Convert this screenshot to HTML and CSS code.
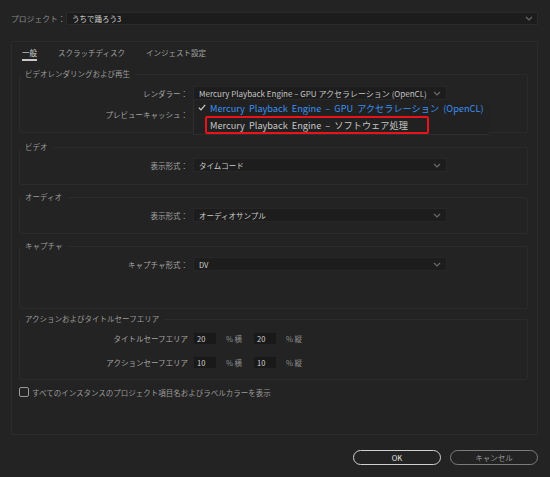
FILE: index.html
```html
<!DOCTYPE html>
<html lang="ja">
<head>
<meta charset="utf-8">
<title>プロジェクト設定</title>
<link rel="stylesheet" href="styles.css">
</head>
<body>
<div class="top">
  <span class="top-label">プロジェクト：</span>
  <div class="top-input">
    <span>うちで踊ろう3</span>
    <svg class="chev" width="8" height="5" viewBox="0 0 8 5"><path d="M1 1l3 3 3-3" fill="none" stroke="#6a6a6a" stroke-width="1.2"/></svg>
  </div>
</div>

<div class="panel">
  <div class="tabs">
    <span class="tab active">一般</span>
    <span class="tab">スクラッチディスク</span>
    <span class="tab">インジェスト設定</span>
  </div>

  <fieldset class="sec s1">
    <legend>ビデオレンダリングおよび再生</legend>
    <div class="row">
      <span class="lbl">レンダラー：</span>
      <div class="sel sel-render">
        <span>Mercury Playback Engine – GPU アクセラレーション (OpenCL)</span>
        <svg class="chev" width="8" height="5" viewBox="0 0 8 5"><path d="M1 1l3 3 3-3" fill="none" stroke="#6a6a6a" stroke-width="1.2"/></svg>
        <div class="popup">
          <div class="opt opt-on">
            <svg class="check" width="8" height="7" viewBox="0 0 8 7"><path d="M0.8 3.6l2.2 2.2L7.2 0.9" fill="none" stroke="#d0d0d0" stroke-width="1.2"/></svg>
            <span>Mercury Playback Engine – GPU アクセラレーション (OpenCL)</span>
          </div>
          <div class="opt opt-hl">
            <span>Mercury Playback Engine – ソフトウェア処理</span>
          </div>
        </div>
      </div>
    </div>
    <div class="row row2">
      <span class="lbl">プレビューキャッシュ：</span>
    </div>
  </fieldset>

  <fieldset class="sec s2">
    <legend>ビデオ</legend>
    <div class="row">
      <span class="lbl">表示形式：</span>
      <div class="sel">
        <span>タイムコード</span>
        <svg class="chev" width="8" height="5" viewBox="0 0 8 5"><path d="M1 1l3 3 3-3" fill="none" stroke="#6a6a6a" stroke-width="1.2"/></svg>
      </div>
    </div>
  </fieldset>

  <fieldset class="sec s3">
    <legend>オーディオ</legend>
    <div class="row">
      <span class="lbl">表示形式：</span>
      <div class="sel">
        <span>オーディオサンプル</span>
        <svg class="chev" width="8" height="5" viewBox="0 0 8 5"><path d="M1 1l3 3 3-3" fill="none" stroke="#6a6a6a" stroke-width="1.2"/></svg>
      </div>
    </div>
  </fieldset>

  <fieldset class="sec s4">
    <legend>キャプチャ</legend>
    <div class="row">
      <span class="lbl">キャプチャ形式：</span>
      <div class="sel">
        <span>DV</span>
        <svg class="chev" width="8" height="5" viewBox="0 0 8 5"><path d="M1 1l3 3 3-3" fill="none" stroke="#6a6a6a" stroke-width="1.2"/></svg>
      </div>
    </div>
  </fieldset>

  <fieldset class="sec s5">
    <legend>アクションおよびタイトルセーフエリア</legend>
    <div class="row">
      <span class="lbl lbl-safe">タイトルセーフエリア</span>
      <span class="num">20</span>
      <span class="unit">% 横</span>
      <span class="num">20</span>
      <span class="unit">% 縦</span>
    </div>
    <div class="row row-b">
      <span class="lbl lbl-safe">アクションセーフエリア</span>
      <span class="num">10</span>
      <span class="unit">% 横</span>
      <span class="num">10</span>
      <span class="unit">% 縦</span>
    </div>
  </fieldset>

  <div class="chk-row">
    <span class="chk"></span>
    <span class="chk-text">すべてのインスタンスのプロジェクト項目名およびラベルカラーを表示</span>
  </div>
</div>

<div class="buttons">
  <span class="btn btn-ok">OK</span>
  <span class="btn btn-cancel">キャンセル</span>
</div>
</body>
</html>
```

FILE: styles.css
```css
* { box-sizing: border-box; }
html, body { margin: 0; padding: 0; }
body {
  width: 550px;
  height: 477px;
  background: #232323;
  font-family: "Noto Sans CJK JP", "Noto Sans", sans-serif;
  font-size: 7.5px;
  color: #a3a3a3;
  overflow: hidden;
}

.top {
  display: flex;
  align-items: center;
  padding: 12px 12px 0 11px;
  height: 25px;
}
.top-label { width: 55px; color: #8a8a8a; font-size: 7.8px; }
.top-input {
  flex: 1;
  height: 13px;
  background: #1c1c1c;
  border: 1px solid #2a2a2a;
  display: flex;
  align-items: center;
  justify-content: space-between;
  padding: 0 4px 0 5px;
  color: #cfcfcf;
}

.chev { display: block; }

.panel {
  margin: 16px 12px 0 11px;
  height: 394px;
  border: 1px solid #2c2c2c;
  border-radius: 2px;
  padding: 0 9px 0 7px;
}

.tabs {
  display: flex;
  height: 26px;
  padding: 6px 0 0 3px;
}
.tab {
  line-height: 10px;
  margin-right: 21px;
  color: #a0a0a0;
}
.tab.active {
  color: #d6d6d6;
  height: 13px;
  border-bottom: 2px solid #c8c8c8;
}

.sec {
  margin: 0;
  border: 1px solid #2b2b2b;
  border-radius: 2px;
  padding: 0;
  min-width: 0;
}
.sec legend {
  padding: 0 5px 0 4px;
  margin-left: 1px;
  line-height: 10px;
  height: 10px;
  color: #9b9b9b;
}

.row {
  display: flex;
  align-items: center;
  height: 14px;
}
.lbl {
  width: 173px;
  text-align: right;
  padding-right: 5px;
  flex: none;
}

.sel {
  position: relative;
  width: 254px;
  height: 14px;
  background: #1d1d1d;
  border: 1px solid #272727;
  display: flex;
  align-items: center;
  justify-content: space-between;
  padding: 0 5px 0 5px;
  color: #cccccc;
}

.s1 { height: 64px; margin-top: 1px; }
.s1 .row { margin-top: 7px; }
.s1 .row2 { margin-top: 7px; }
.sel-render { color: #c4c4c4; font-size: 8px; }

.popup {
  position: absolute;
  left: -1px;
  top: 13px;
  width: 296px;
  height: 35px;
  background: #212121;
  border-left: 1px solid #2e2e2e;
  border-bottom: 1px solid #2e2e2e;
  z-index: 5;
}
.opt {
  display: flex;
  align-items: center;
  height: 15px;
  font-size: 9.2px;
  word-spacing: 2px;
  white-space: nowrap;
}
.opt-on { color: #3b8ff0; padding-left: 4px; }
.check { margin-right: 4px; }
.opt-hl {
  margin: 1px 0 0 11px;
  width: 224px;
  height: 18px;
  border: 2px solid #e8131b;
  border-radius: 2px;
  padding-left: 3px;
  color: #c6c6c6;
}

.s2 { height: 43px; margin-top: 9px; }
.s2 .row { margin-top: 6px; }
.s3 { height: 42px; margin-top: 7px; }
.s3 .row { margin-top: 6px; }
.s4 { height: 68px; margin-top: 7px; }
.s4 .row { margin-top: 6px; }

.s5 { height: 66px; margin-top: 5px; }
.s5 .row { margin-top: 8px; height: 13px; }
.s5 .row-b { margin-top: 11px; }
.num {
  width: 24px;
  height: 13px;
  background: #191919;
  border: 1px solid #222;
  color: #d2d2d2;
  padding-left: 3px;
  line-height: 11px;
  flex: none;
}
.unit {
  width: 36px;
  padding-left: 9px;
  color: #8f8f8f;
  flex: none;
}

.chk-row {
  display: flex;
  align-items: center;
  margin-top: 7px;
  height: 10px;
}
.chk {
  width: 10px;
  height: 10px;
  border: 1.5px solid #9a9a9a;
  border-radius: 2px;
  margin-right: 3px;
}
.chk-text { color: #9b9b9b; }

.buttons {
  display: flex;
  justify-content: flex-end;
  gap: 9px;
  padding: 15px 12px 0 0;
}
.btn {
  width: 88px;
  height: 15px;
  border-radius: 8px;
  display: flex;
  align-items: center;
  justify-content: center;
}
.btn-ok { border: 1.5px solid #cfcfcf; color: #e6e6e6; }
.btn-cancel { border: 1.5px solid #7c7c7c; color: #959595; }
```
